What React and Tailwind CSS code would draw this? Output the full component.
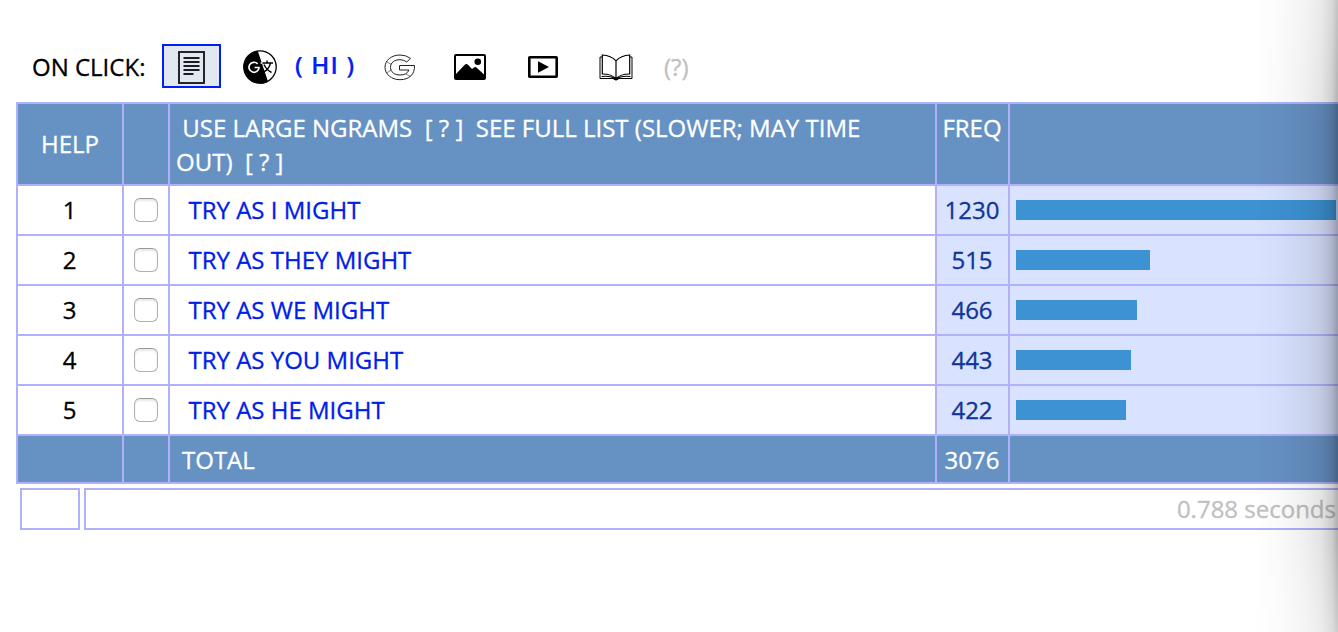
const rows = [
  ["TRY AS I MIGHT", 1230, 320],
  ["TRY AS THEY MIGHT", 515, 134],
  ["TRY AS WE MIGHT", 466, 121],
  ["TRY AS YOU MIGHT", 443, 115],
  ["TRY AS HE MIGHT", 422, 110],
];

function PageIcon() {
  return (
    <svg width="27" height="33" viewBox="0 0 27 33" fill="none" stroke="#1c1c1c">
      <rect x="1" y="1" width="25" height="31" strokeWidth="1.9" />
      <path d="M5.5 7h16M5.5 11h16M5.5 15h16M5.5 19h16M5.5 23h10" strokeWidth="2" />
    </svg>
  );
}

function TranslateIcon() {
  return (
    <svg width="34" height="34" viewBox="0 0 34 34" fill="none">
      <circle cx="17" cy="17" r="16.2" fill="#fff" stroke="#000" strokeWidth="1.3" />
      <path d="M14.7 0.7A16.5 16.5 0 1 0 25 31.5Z" fill="#000" />
      <path d="M14.6 13.8A5 5 0 1 0 16 17.5H11.5" stroke="#fff" strokeWidth="1.7" />
      <path d="M17.6 13h2.4M21.2 17Q21.8 18 22.3 18.6" stroke="#fff" strokeWidth="1.3" />
      <path d="M19.4 13H30M24 10.6V13M27.5 13Q26 19.5 20 22.5M21 14.5Q23.5 20 28.5 22.5" stroke="#000" strokeWidth="1.4" />
    </svg>
  );
}

function GoogleIcon() {
  return (
    <svg width="32" height="27" viewBox="0 0 32 27" fill="none" stroke="#222" strokeWidth="1">
      <path d="M26.5 4.4Q22 1 16 1C7.5 1 1 6.3 1 13.3S7.5 25.7 16 25.7C25 25.7 31 20.5 30.5 11.5H15.5V16H25C23.5 19.5 20.5 21 16 21C10.5 21 6.5 18 6.5 13.3S10.5 5.7 16 5.7Q20 5.7 22.7 8Z" />
      <path d="M2.5 7.6L7.3 10.5M2.5 19L7.3 16M22 20L26.5 22.6" strokeWidth=".6" />
    </svg>
  );
}

function ImageIcon() {
  return (
    <svg width="32" height="26" viewBox="0 0 32 26">
      <rect x="1" y="1" width="30" height="24" rx="1" fill="#fff" stroke="#000" strokeWidth="2" />
      <circle cx="23.8" cy="7.7" r="3.3" />
      <path d="M2 20L10.5 11Q12.5 9 14.2 11L18 15L20 13.5Q21.5 12.3 23 14L30 20.5V25H2Z" />
    </svg>
  );
}

function VideoIcon() {
  return (
    <svg width="30" height="22" viewBox="0 0 30 22">
      <rect x="1.3" y="1.3" width="27.4" height="19.4" rx=".5" fill="#fff" stroke="#000" strokeWidth="2.6" />
      <path d="M10 5.2L21 11L10 16.8Z" />
    </svg>
  );
}

function BookIcon() {
  return (
    <svg width="34" height="27" viewBox="0 0 34 27" fill="none" stroke="#000">
      <path d="M3.5 3H1V24.5H14L17 26L20 24.5H33V3H30.5" strokeWidth="1" />
      <path d="M3.3 1Q12 1.5 17 6.8Q22 1.5 30.7 1V20Q22 19.8 17 24.6Q12 19.8 3.3 20ZM17 6.8V25" strokeWidth="1.2" />
      <path d="M2.5 22.5Q12 21.5 17 25.2Q22 21.5 31.5 22.5" strokeWidth="1.1" />
      <path d="M14 24.3h6L17 26Z" fill="#000" />
    </svg>
  );
}

export default function App() {
  return (
    <div className="relative h-[632px] w-[1338px] overflow-hidden bg-white font-['Open_Sans',sans-serif] text-[24px] leading-[34px] text-black [-webkit-text-stroke:0.3px_currentColor]">
      <div className="flex h-[102px] items-center pt-8 pl-8">
        <div className="w-[130px] whitespace-nowrap">ON CLICK:</div>
        <div className="mb-[2px] flex h-11 w-[59px] items-center justify-center border-2 border-[#0020f5] bg-[#e1e8f1] pt-[3px]">
          <PageIcon />
        </div>
        <div className="ml-[22px]"><TranslateIcon /></div>
        <div className="ml-[18px] w-[89px] pb-1 font-semibold tracking-[1.2px] whitespace-pre text-[#0020f5] [-webkit-text-stroke:0.2px_currentColor]">( HI )</div>
        <div><GoogleIcon /></div>
        <div className="ml-[38px]"><ImageIcon /></div>
        <div className="ml-[42px]"><VideoIcon /></div>
        <div className="ml-[41px]"><BookIcon /></div>
        <div className="ml-[31px] text-[#c0c0c0]">(?)</div>
      </div>

      <div className="ml-4 grid w-[1330px] grid-cols-[104px_44px_765px_71px_1fr] gap-[2px] bg-[#b1b1fb] p-[2px]">
        <div className="flex h-20 items-center justify-center bg-[#6691c3] text-white">HELP</div>
        <div className="bg-[#6691c3]" />
        <div className="bg-[#6691c3] pt-[7px] pl-[6px] whitespace-pre text-white">
          {" USE LARGE NGRAMS  [ ? ]  SEE FULL LIST (SLOWER; MAY TIME\nOUT)  [ ? ]"}
        </div>
        <div className="bg-[#6691c3] pt-[7px] pr-px text-center text-white">FREQ</div>
        <div className="bg-[#6691c3]" />
        {rows.map(([phrase, freq, width], i) => (
          <div key={phrase} className="contents">
            <div className="flex h-12 items-center justify-center bg-white pr-px">{i + 1}</div>
            <div className="flex items-center justify-center bg-white">
              <span className="h-6 w-6 rounded-[6px] border border-[#b0b0b0] border-t-[#999] bg-white shadow-[inset_0_2px_2px_#e8e8e8]" />
            </div>
            <div className="flex items-center bg-white pl-[18.5px] text-[#0020e6]">{phrase}</div>
            <div className="flex items-center justify-center bg-[#d9e2fe] pr-px text-[#0f3599]">{freq}</div>
            <div className="flex items-center bg-[#d9e2fe] pl-[6px]">
              <div className="h-5 bg-[#3d92d3]" style={{ width }} />
            </div>
          </div>
        ))}
        <div className="h-[46px] bg-[#6691c3]" />
        <div className="bg-[#6691c3]" />
        <div className="flex items-center bg-[#6691c3] pt-[2px] pl-3 text-white">TOTAL</div>
        <div className="flex items-center justify-center bg-[#6691c3] pt-[2px] pr-px text-white">3076</div>
        <div className="bg-[#6691c3]" />
      </div>

      <div className="mt-1 ml-5 flex gap-1">
        <div className="h-[42px] w-[60px] shrink-0 border-2 border-[#b1b1fb]" />
        <div className="flex h-[42px] w-[1260px] shrink-0 items-center justify-end border-2 border-[#b1b1fb] pr-[6px] text-[#c0c0c0]">
          0.788 seconds
        </div>
      </div>

      <div className="pointer-events-none absolute top-0 right-0 h-full w-[84px] bg-[linear-gradient(to_right,transparent,rgba(0,0,0,0.02)_30%,rgba(0,0,0,0.06)_60%,rgba(0,0,0,0.11)_80%,rgba(0,0,0,0.2)_93%,rgba(0,0,0,0.32))] [mask-image:linear-gradient(to_bottom,rgba(0,0,0,0.75),black_20%,black_85%,rgba(0,0,0,0.65))]" />
    </div>
  );
}
